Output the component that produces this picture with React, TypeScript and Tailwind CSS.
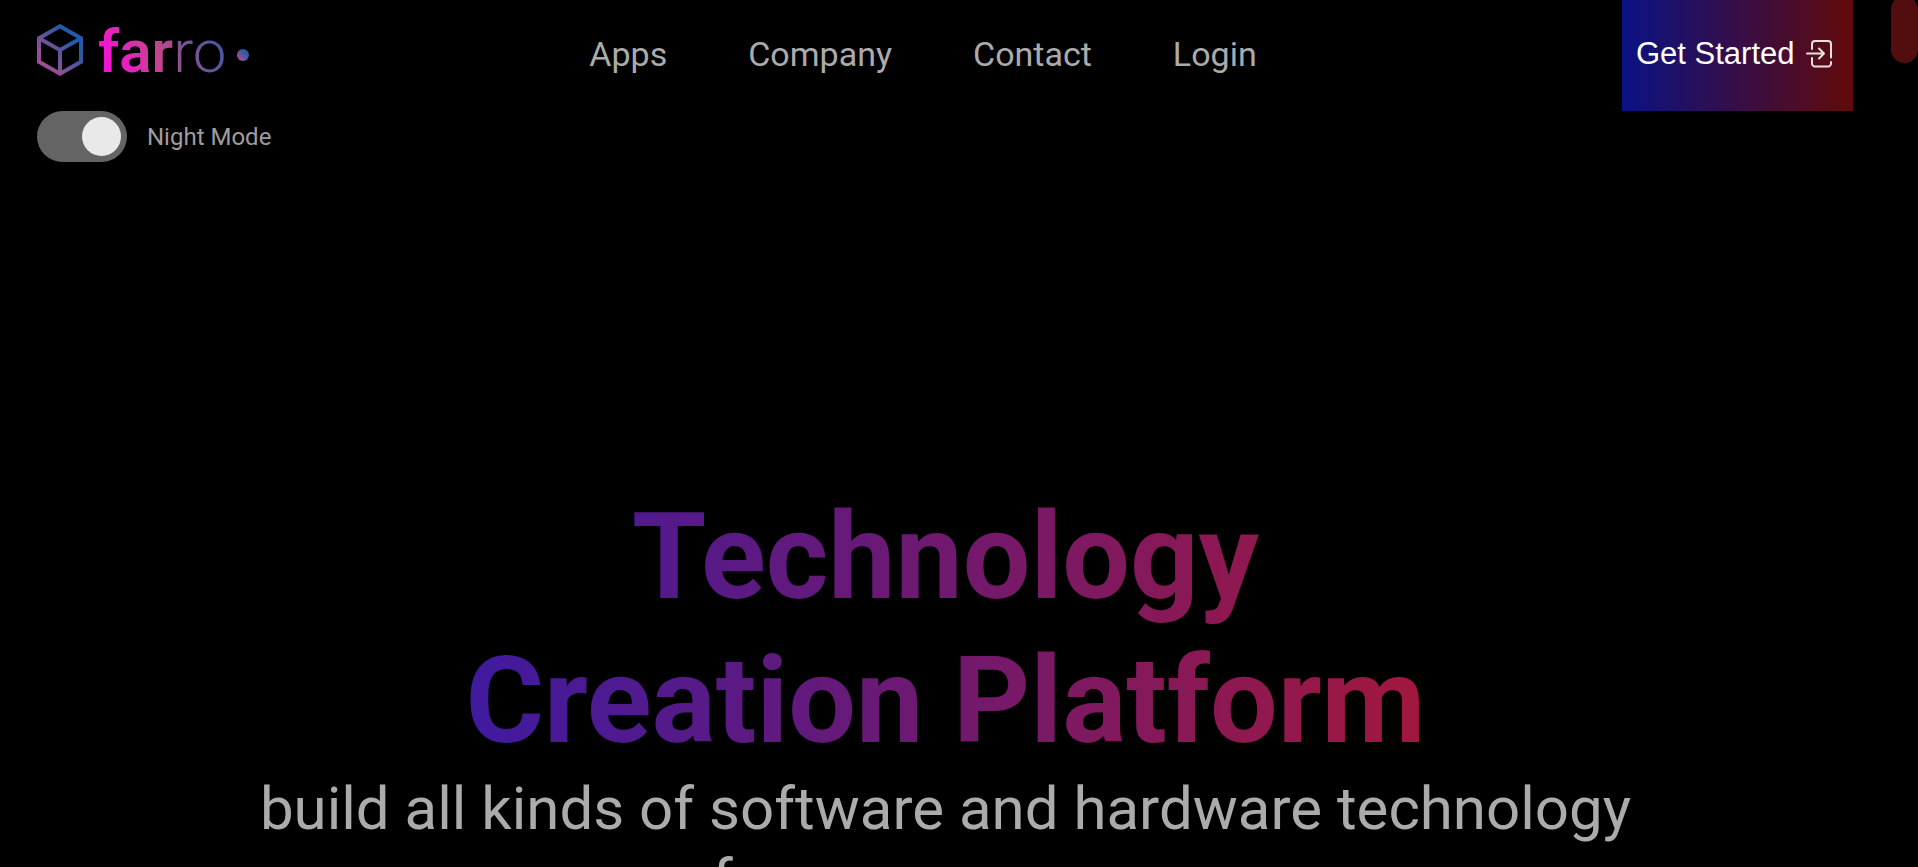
import { useState } from "react";

const navLinks = ["Apps", "Company", "Contact", "Login"];

function Logo() {
  return (
    <a href="#home" aria-label="farro home" className="block">
      <svg width="216" height="84" viewBox="0 -8 216 84" className="block" role="img" aria-label="farro">
        <defs>
          <linearGradient id="cube" x1="0" y1="1" x2="1" y2="0">
            <stop offset="0" stopColor="#b04c90" />
            <stop offset="0.25" stopColor="#8f5095" />
            <stop offset="0.75" stopColor="#235aa9" />
          </linearGradient>
          <linearGradient id="word" gradientUnits="userSpaceOnUse" x1="64" y1="54" x2="134" y2="18">
            <stop offset="0" stopColor="#f50fdc" />
            <stop offset="0.3" stopColor="#ea1ec4" />
            <stop offset="0.75" stopColor="#c2458c" />
            <stop offset="1" stopColor="#a0508c" />
          </linearGradient>
          <linearGradient id="light" gradientUnits="userSpaceOnUse" x1="138" y1="54" x2="192" y2="22">
            <stop offset="0" stopColor="#984f8e" />
            <stop offset="0.5" stopColor="#6c559a" />
            <stop offset="1" stopColor="#3559a4" />
          </linearGradient>
        </defs>
        <path
          d="M23 8.3 L44 20.2 V43.8 L23 55.7 L2 43.8 V20.2 Z M2 20.2 L23 32 L44 20.2 M23 32 V55.7"
          fill="none"
          stroke="url(#cube)"
          strokeWidth="4"
        />
        <text x="61" y="54" fontSize="60" className="font-['Roboto',sans-serif]">
          <tspan fontWeight="600" fill="url(#word)">far</tspan>
          <tspan fontWeight="300" fill="url(#light)">ro</tspan>
        </text>
        <circle cx="206" cy="37" r="6" fill="url(#cube)" />
      </svg>
    </a>
  );
}

function EnterIcon() {
  return (
    <svg
      width="26"
      height="28"
      viewBox="0 0 26 28"
      fill="none"
      stroke="currentColor"
      strokeOpacity="0.88"
      strokeWidth="2"
      strokeLinecap="round"
      strokeLinejoin="round"
      aria-hidden="true"
    >
      <path d="M6 9V4a3 3 0 0 1 3-3h13a3 3 0 0 1 3 3v13.5M6 18v5.500a3 3 0 0 0 3 3h13a3 3 0 0 0 3-3v-1.500M1 13.500h17M13 8.500l5 5-5 5" />
    </svg>
  );
}

export default function App() {
  const [night, setNight] = useState(true);
  return (
    <div className="flex h-screen overflow-hidden bg-black font-['Roboto',sans-serif] text-[#ababab]">
      <div className="min-w-0 flex-1">
        <header className="flex h-[111px] items-start justify-between pl-[37px] pr-[38px]">
          <div className="flex-1 pt-[10px]">
            <Logo />
          </div>
          <nav className="flex gap-[81px] pt-[34px] pr-11 text-[34px] leading-[40px]">
            {navLinks.map((name) => (
              <a key={name} href={`#${name.toLowerCase()}`}>
                {name}
              </a>
            ))}
          </nav>
          <div className="flex flex-1 justify-end">
            <button
              type="button"
              className="flex h-[111px] w-[231px] items-center gap-[11px] bg-linear-to-r/srgb from-[#0a1284] to-[#610a0a] pb-[3px] pl-[14px] font-['Liberation_Sans',sans-serif] text-[31px] whitespace-nowrap text-white"
            >
              Get Started
              <EnterIcon />
            </button>
          </div>
        </header>
        <label className="ml-[37px] flex w-fit cursor-pointer items-center gap-5 text-2xl text-[#a09c9c]">
          <input
            type="checkbox"
            checked={night}
            onChange={(e) => setNight(e.target.checked)}
            className="h-[51px] w-[90px] appearance-none rounded-full bg-[#646464] p-[6px] before:block before:size-[39px] before:rounded-full before:bg-[#e9e9e9] checked:before:ml-auto"
          />
          <span>Night Mode</span>
        </label>
        <main className="mx-auto w-[1400px] max-w-full pt-[323px] text-center">
          <h1 className="bg-linear-to-r/srgb from-[#291bb6] to-[#b81727] bg-clip-text text-[120px] leading-[144px] font-bold text-transparent">
            Technology
            <br />
            Creation Platform
          </h1>
          <p className="text-[60px] leading-[72px]">build all kinds of software and hardware technology for your company</p>
        </main>
      </div>
      <div className="w-[27px] shrink-0" aria-hidden="true">
        <div className="-mt-1 h-[67px] rounded-full bg-[#520e0e]" />
      </div>
    </div>
  );
}
